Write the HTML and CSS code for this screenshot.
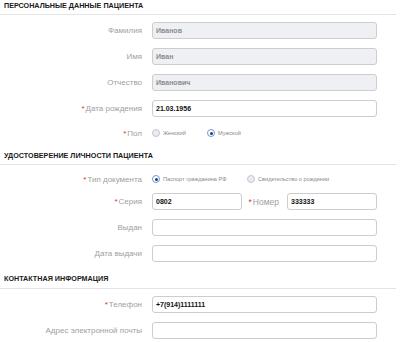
FILE: index.html
```html
<!DOCTYPE html>
<html lang="ru">
<head>
<meta charset="utf-8">
<link rel="stylesheet" href="styles.css">
</head>
<body>
<div class="form">
  <h2 class="sec sec-first">ПЕРСОНАЛЬНЫЕ ДАННЫЕ ПАЦИЕНТА</h2>
  <div class="row">
    <label class="lbl">Фамилия</label>
    <div class="inp dis">Иванов</div>
  </div>
  <div class="row">
    <label class="lbl">Имя</label>
    <div class="inp dis">Иван</div>
  </div>
  <div class="row">
    <label class="lbl">Отчество</label>
    <div class="inp dis">Иванович</div>
  </div>
  <div class="row">
    <label class="lbl"><span class="req">*</span>Дата рождения</label>
    <div class="inp">21.03.1956</div>
  </div>
  <div class="row radio-row">
    <label class="lbl"><span class="req">*</span>Пол</label>
    <div class="radios">
      <span class="opt opt-f"><span class="rb"></span>Женский</span>
      <span class="opt"><span class="rb on"></span>Мужской</span>
    </div>
  </div>

  <h2 class="sec sec-2">УДОСТОВЕРЕНИЕ ЛИЧНОСТИ ПАЦИЕНТА</h2>
  <div class="row radio-row">
    <label class="lbl"><span class="req">*</span>Тип документа</label>
    <div class="radios">
      <span class="opt opt-p"><span class="rb on"></span>Паспорт гражданина РФ</span>
      <span class="opt"><span class="rb"></span>Свидетельство о рождении</span>
    </div>
  </div>
  <div class="row">
    <label class="lbl"><span class="req">*</span>Серия</label>
    <div class="pair">
      <div class="inp inp-ser">0802</div>
      <label class="lbl lbl-num"><span class="req">*</span>Номер</label>
      <div class="inp inp-num">333333</div>
    </div>
  </div>
  <div class="row">
    <label class="lbl">Выдан</label>
    <div class="inp"></div>
  </div>
  <div class="row">
    <label class="lbl">Дата выдачи</label>
    <div class="inp"></div>
  </div>

  <h2 class="sec sec-3">КОНТАКТНАЯ ИНФОРМАЦИЯ</h2>
  <div class="row">
    <label class="lbl"><span class="req">*</span>Телефон</label>
    <div class="inp">+7(914)1111111</div>
  </div>
  <div class="row">
    <label class="lbl">Адрес электронной почты</label>
    <div class="inp"></div>
  </div>
</div>
</body>
</html>
```

FILE: styles.css
```css
html, body {
  margin: 0;
  padding: 0;
  background: #ffffff;
}
body {
  font-family: "Liberation Sans", Arial, sans-serif;
  width: 400px;
  height: 342px;
  overflow: hidden;
}
.form {
  display: flex;
  flex-direction: column;
  width: 396px;
}
.sec {
  margin: 0;
  padding: 0 0 2px 4px;
  font-size: 7.2px;
  line-height: 12px;
  height: 12px;
  font-weight: bold;
  color: #1a1a1a;
  border-bottom: 1px solid #e4e4e4;
}
.sec-first { margin-top: 0; }
.sec-2 { margin-top: 10px; }
.sec-3 { margin-top: 11px; padding-bottom: 3px; }

.row {
  display: grid;
  grid-template-columns: 142px 225px;
  column-gap: 10px;
  align-items: center;
  height: 17px;
  margin-top: 9px;
}
.sec + .row { margin-top: 7px; }
.radio-row { height: 14px; }
.radio-row + .row { margin-top: 7px; }

.lbl {
  text-align: right;
  font-size: 8px;
  color: #a0a0a0;
  white-space: nowrap;
}
.req {
  color: #d9312b;
  margin-right: 1px;
}
.inp {
  box-sizing: border-box;
  height: 17px;
  border: 1px solid #cdcdcd;
  border-radius: 3px;
  background: #fff;
  font-size: 7px;
  font-weight: bold;
  color: #111;
  padding: 0 3px;
  line-height: 15px;
  white-space: nowrap;
}
.inp.dis {
  background: #eef0f3;
  color: #8c8c8c;
}
.pair {
  display: flex;
  align-items: center;
}
.inp-ser { width: 90px; }
.lbl-num { width: 37px; margin-right: 8px; text-align: right; font-size: 8.5px; }
.inp-num { width: 90px; }

.radios {
  display: flex;
  align-items: center;
  font-size: 5.6px;
  color: #8a8a8a;
}
.opt {
  display: flex;
  align-items: center;
  white-space: nowrap;
}
.opt-f { width: 55px; }
.opt-p { width: 95px; }
.rb {
  box-sizing: border-box;
  width: 8px;
  height: 8px;
  border-radius: 50%;
  border: 1px solid #c4c8cf;
  background: #e9ecf0;
  margin-right: 3px;
  position: relative;
}
.rb.on {
  border-color: #6f9ad6;
  background: #ffffff;
}
.rb.on::after {
  content: "";
  position: absolute;
  left: 1.5px;
  top: 1.5px;
  width: 3px;
  height: 3px;
  border-radius: 50%;
  background: #1f3f7a;
}
```
